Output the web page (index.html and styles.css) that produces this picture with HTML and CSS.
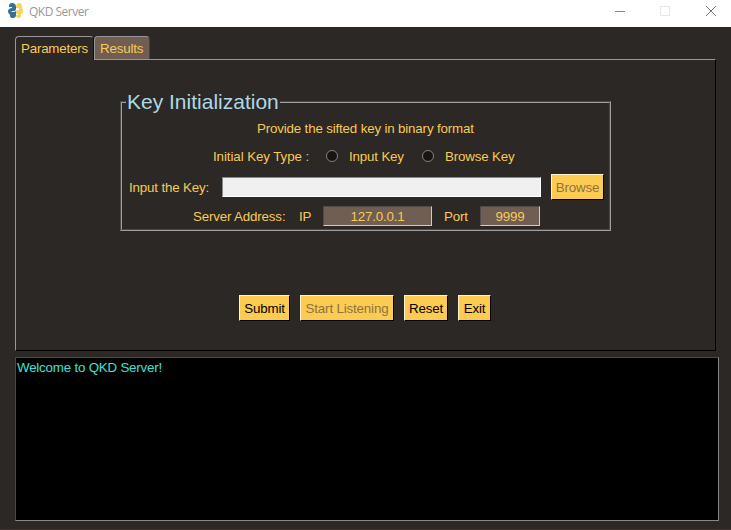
FILE: index.html
```
<!DOCTYPE html>
<html lang="en">
<head>
<meta charset="utf-8">
<title>QKD Server</title>
<link rel="stylesheet" href="styles.css">
</head>
<body>
<header class="titlebar">
  <svg class="logo" width="16" height="16" viewBox="0 0 16 16">
    <path fill="#386f98" d="M1 3Q1 0 4 0Q8 0 8 4V6Q8 8 6 8H5Q3 8 3 10V12Q0 11 0 8Q0 6 3 5H4V4H1Z"/>
    <path fill="#386f98" d="M2 11Q2 9 4 9H6Q8 9 8 7V12Q8 15 5 15Q2 15 2 13Z"/>
    <path fill="#f6d75e" d="M8 4Q8 0 11 0Q14 0 14 3V5Q15 5 15 8Q15 11 13 11V13Q13 15 10 15Q8 15 8 13V12H10V11H8V9Q8 7 10 7H11V5H8Z"/>
  </svg>
  <span class="title">QKD Server</span>
  <svg class="controls" width="104" height="12" viewBox="0 0 104 12" fill="none">
    <path d="M0 6.5H10" stroke="#888"/>
    <path d="M45.5 1.5h9v9h-9z" stroke="#e6e6e6"/>
    <path d="M91 1L101 11M101 1L91 11" stroke="#777"/>
  </svg>
</header>
<main>
  <nav class="tabs">
    <div class="tab active">Parameters</div>
    <div class="tab other">Results</div>
  </nav>
  <section class="panel">
    <fieldset class="frame">
      <legend>Key Initialization</legend>
      <div class="row hint">Provide the sifted key in binary format</div>
      <div class="row types">
        <span class="l-type">Initial Key Type :</span>
        <i class="radio"></i><span class="l-input">Input Key</span>
        <i class="radio"></i><span class="l-browse">Browse Key</span>
      </div>
      <div class="row key">
        <span class="l-key">Input the Key:</span>
        <div class="entry"></div>
        <div class="btn off b-browse">Browse</div>
      </div>
      <div class="row address">
        <span class="l-server">Server Address:</span>
        <span class="l-ip">IP</span>
        <div class="field ip">127.0.0.1</div>
        <span class="l-port">Port</span>
        <div class="field port">9999</div>
      </div>
    </fieldset>
    <div class="actions">
      <div class="btn b-submit">Submit</div>
      <div class="btn off b-listen">Start Listening</div>
      <div class="btn b-reset">Reset</div>
      <div class="btn b-exit">Exit</div>
    </div>
  </section>
  <section class="console">Welcome to QKD Server!</section>
</main>
</body>
</html>
```
FILE: styles.css
```
* { box-sizing: border-box; }
body {
  margin: 0;
  width: 731px;
  height: 530px;
  overflow: hidden;
  background: #2c2825;
  color: #f8ca56;
  font: 13.33px/16px "Liberation Sans", Arial, sans-serif;
  letter-spacing: -0.16px;
  white-space: nowrap;
  border-bottom: 1px solid #44332d;
}
.titlebar {
  height: 27px;
  background: #fff;
  display: flex;
  padding-left: 8px;
}
.logo { margin-top: 3px; }
.title {
  width: 591px;
  padding: 4px 0 0 5px;
  color: #999;
  font: 12px/16px "Open Sans", "Noto Sans", sans-serif;
  letter-spacing: -0.5px;
}
.controls { margin-top: 5px; }
main { padding: 9px 12px 0 15px; }
.tabs { display: flex; height: 23px; }
.tab {
  border: 1px solid #999693;
  border-bottom: 0;
  border-radius: 4px 4px 0 0;
  padding: 4px 0 0 5px;
}
.active {
  width: 79px;
  height: 24px;
  background: #2c2825;
  border-right-color: #111;
  position: relative;
  letter-spacing: -0.2px;
}
.other { width: 56px; background: #705e52; border-right-color: #4a3f38; }
.panel {
  width: 701px;
  height: 292px;
  border: 1px solid #999693;
  border-right-color: #000;
  border-bottom-color: #000;
  padding: 31px 0 0 104px;
}
.frame {
  width: 491px;
  height: 140px;
  margin: 0;
  padding: 0;
  border: 2px groove #a09d9a;
}
legend {
  margin-left: 4px;
  padding: 0 1px;
  height: 22px;
  color: #add8e6;
  font-size: 21px;
  line-height: 22px;
  letter-spacing: 0;
}
.row { display: flex; align-items: center; }
.row span { padding-top: 2px; }
.hint { height: 31px; padding-left: 135px; }
.types { height: 28px; padding: 0 0 4px 91px; }
.l-type { width: 113px; letter-spacing: -0.08px; }
.radio {
  width: 12px;
  height: 12px;
  border: 1px solid #858380;
  border-radius: 50%;
  background: #161311;
}
.l-input { width: 84px; padding-left: 11px; }
.l-browse { padding-left: 11px; }
.key { height: 30px; padding-left: 7px; }
.l-key { width: 93px; }
.entry {
  width: 319px;
  height: 20px;
  background: #f0f0f0;
  border: 1px solid #fff;
  border-top-color: #888;
  border-left-color: #888;
  margin-right: 10px;
}
.btn {
  height: 26px;
  padding: 5px 0 0;
  text-align: center;
  background: #fdcb52;
  color: #000;
  border: 1px solid #000;
  border-top-color: #fff3ce;
  border-left-color: #fff3ce;
}
.off { color: #8c7442; }
.b-browse { width: 53px; }
.address { height: 26px; padding: 2px 0 0 71px; }
.l-server { width: 106px; }
.l-ip { width: 24px; }
.field {
  height: 20px;
  padding-top: 2px;
  background: #705e52;
  border: 1px solid #d0cbc7;
  border-top-color: #514b47;
  border-left-color: #514b47;
  text-align: center;
}
.ip { width: 109px; }
.l-port { width: 48px; padding-left: 12px; }
.port { width: 60px; }
.actions { display: flex; padding: 64px 0 0 119px; }
.b-submit { width: 51px; margin-right: 10px; }
.b-listen { width: 94px; margin-right: 10px; }
.b-reset { width: 44px; margin-right: 10px; }
.b-exit { width: 33px; }
.console {
  width: 704px;
  height: 164px;
  margin-top: 6px;
  padding: 2px 1px;
  border: 1px solid #888;
  border-top-color: #4b4846;
  border-left-color: #4b4846;
  background: #000;
  color: #40e0d0;
  letter-spacing: -0.2px;
}
```
